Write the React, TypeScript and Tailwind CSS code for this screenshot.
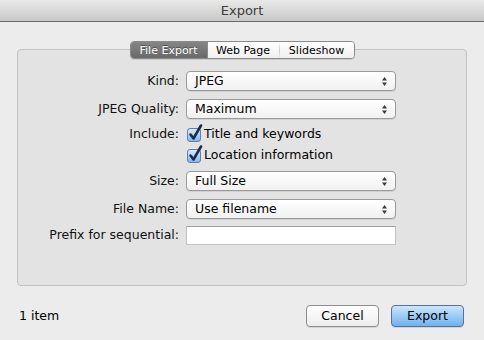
import React from "react";

const font = { fontFamily: '"DejaVu Sans", "Liberation Sans", sans-serif' };

function Stepper() {
  return (
    <svg width="7" height="11" viewBox="0 0 7 11" className="shrink-0">
      <path d="M3.5 1 L6 4.5 L1 4.5 Z" fill="#3a3a3a" />
      <path d="M3.5 10 L6 6.5 L1 6.5 Z" fill="#3a3a3a" />
    </svg>
  );
}

function Popup({ value }: { value: string }) {
  return (
    <div className="w-[210px] h-[20px] rounded-[4px] border border-[#9a9a9a] bg-gradient-to-b from-white to-[#f1f1f1] shadow-[0_1px_0_rgba(0,0,0,0.08)] flex items-center pl-[8px] pr-[7px]">
      <span className="flex-1 text-[12.5px] text-black leading-none">{value}</span>
      <Stepper />
    </div>
  );
}

function Label({ children }: { children: React.ReactNode }) {
  return (
    <div className="w-[161px] text-right text-[12.5px] text-[#111] leading-none shrink-0">
      {children}
    </div>
  );
}

function Check({ label }: { label: string }) {
  return (
    <div className="h-[21px] flex items-center">
      <div className="relative w-[14px] h-[14px] ml-[1px] rounded-[3px] border border-[#5d7fb3] bg-gradient-to-b from-[#dcebfb] to-[#87b6ea] shrink-0">
        <svg
          width="16"
          height="18"
          viewBox="0 0 16 18"
          className="absolute left-[0px] top-[-5px] overflow-visible"
        >
          <path
            d="M2.5 10.5 L5.5 14.5 L13 1.5"
            fill="none"
            stroke="#1d2c4a"
            strokeWidth="2.6"
            strokeLinecap="round"
            strokeLinejoin="round"
          />
        </svg>
      </div>
      <span className="ml-[3px] text-[12.5px] text-black leading-none">{label}</span>
    </div>
  );
}

export default function App() {
  return (
    <div className="w-[484px] h-[340px] bg-[#ececec] flex flex-col overflow-hidden" style={font}>
      <div className="h-[22px] shrink-0 bg-gradient-to-b from-[#e9e9e9] to-[#c8c8c8] border-b border-[#6b6b6b] flex items-center justify-center">
        <span className="text-[13px] text-[#3d3d3d] leading-none">Export</span>
      </div>

      <div className="px-[17px] flex flex-col">
        <div className="relative z-10 mt-[19px] flex justify-center">
          <div className="h-[18px] flex rounded-[4px] border border-[#8a8a8a] overflow-hidden shadow-[0_1px_0_rgba(0,0,0,0.1)]">
            <div className="w-[76px] flex items-center justify-center bg-gradient-to-b from-[#858585] to-[#6a6a6a] text-white text-[11px] leading-none [text-shadow:0_-1px_0_rgba(0,0,0,0.4)]">
              File Export
            </div>
            <div className="w-[72px] flex items-center justify-center bg-gradient-to-b from-white to-[#f0f0f0] text-black text-[11px] leading-none border-l border-[#8a8a8a]">
              Web Page
            </div>
            <div className="w-[1px] bg-gradient-to-b from-white via-[#c9c9c9] to-[#f0f0f0]" />
            <div className="w-[74px] flex items-center justify-center bg-gradient-to-b from-white to-[#f0f0f0] text-black text-[11px] leading-none">
              Slideshow
            </div>
          </div>
        </div>

        <div className="mt-[-10px] h-[237px] rounded-[4px] border border-[#c3c3c3] bg-[#e3e3e3] flex flex-col pt-[21px]">
          <div className="flex items-center gap-[7px]">
            <Label>Kind:</Label>
            <Popup value="JPEG" />
          </div>
          <div className="mt-[8px] flex items-center gap-[7px]">
            <Label>JPEG Quality:</Label>
            <Popup value="Maximum" />
          </div>
          <div className="mt-[5px] flex gap-[7px]">
            <div className="h-[21px] flex items-center">
              <Label>Include:</Label>
            </div>
            <div className="flex flex-col">
              <Check label="Title and keywords" />
              <Check label="Location information" />
            </div>
          </div>
          <div className="mt-[5px] flex items-center gap-[7px]">
            <Label>Size:</Label>
            <Popup value="Full Size" />
          </div>
          <div className="mt-[8px] flex items-center gap-[7px]">
            <Label>File Name:</Label>
            <Popup value="Use filename" />
          </div>
          <div className="mt-[7px] flex items-center gap-[7px]">
            <Label>Prefix for sequential:</Label>
            <div className="w-[210px] h-[19px] bg-white border border-[#c2c2c2] border-t-[#9e9e9e]" />
          </div>
        </div>
      </div>

      <div className="mt-[19px] pl-[19px] pr-[20px] flex items-center">
        <span className="flex-1 text-[12.5px] text-black leading-none">1 item</span>
        <div className="w-[73px] h-[22px] rounded-[4px] border border-[#8e8e8e] bg-gradient-to-b from-white to-[#ededed] shadow-[0_1px_0_rgba(0,0,0,0.1)] flex items-center justify-center text-[12.5px] text-black leading-none">
          Cancel
        </div>
        <div className="ml-[12px] w-[73px] h-[22px] rounded-[4px] border border-[#56729c] bg-gradient-to-b from-[#cde6fc] via-[#9ccbf5] to-[#6eb1ee] shadow-[0_1px_0_rgba(0,0,0,0.1)] flex items-center justify-center text-[12.5px] text-black leading-none">
          Export
        </div>
      </div>
    </div>
  );
}
